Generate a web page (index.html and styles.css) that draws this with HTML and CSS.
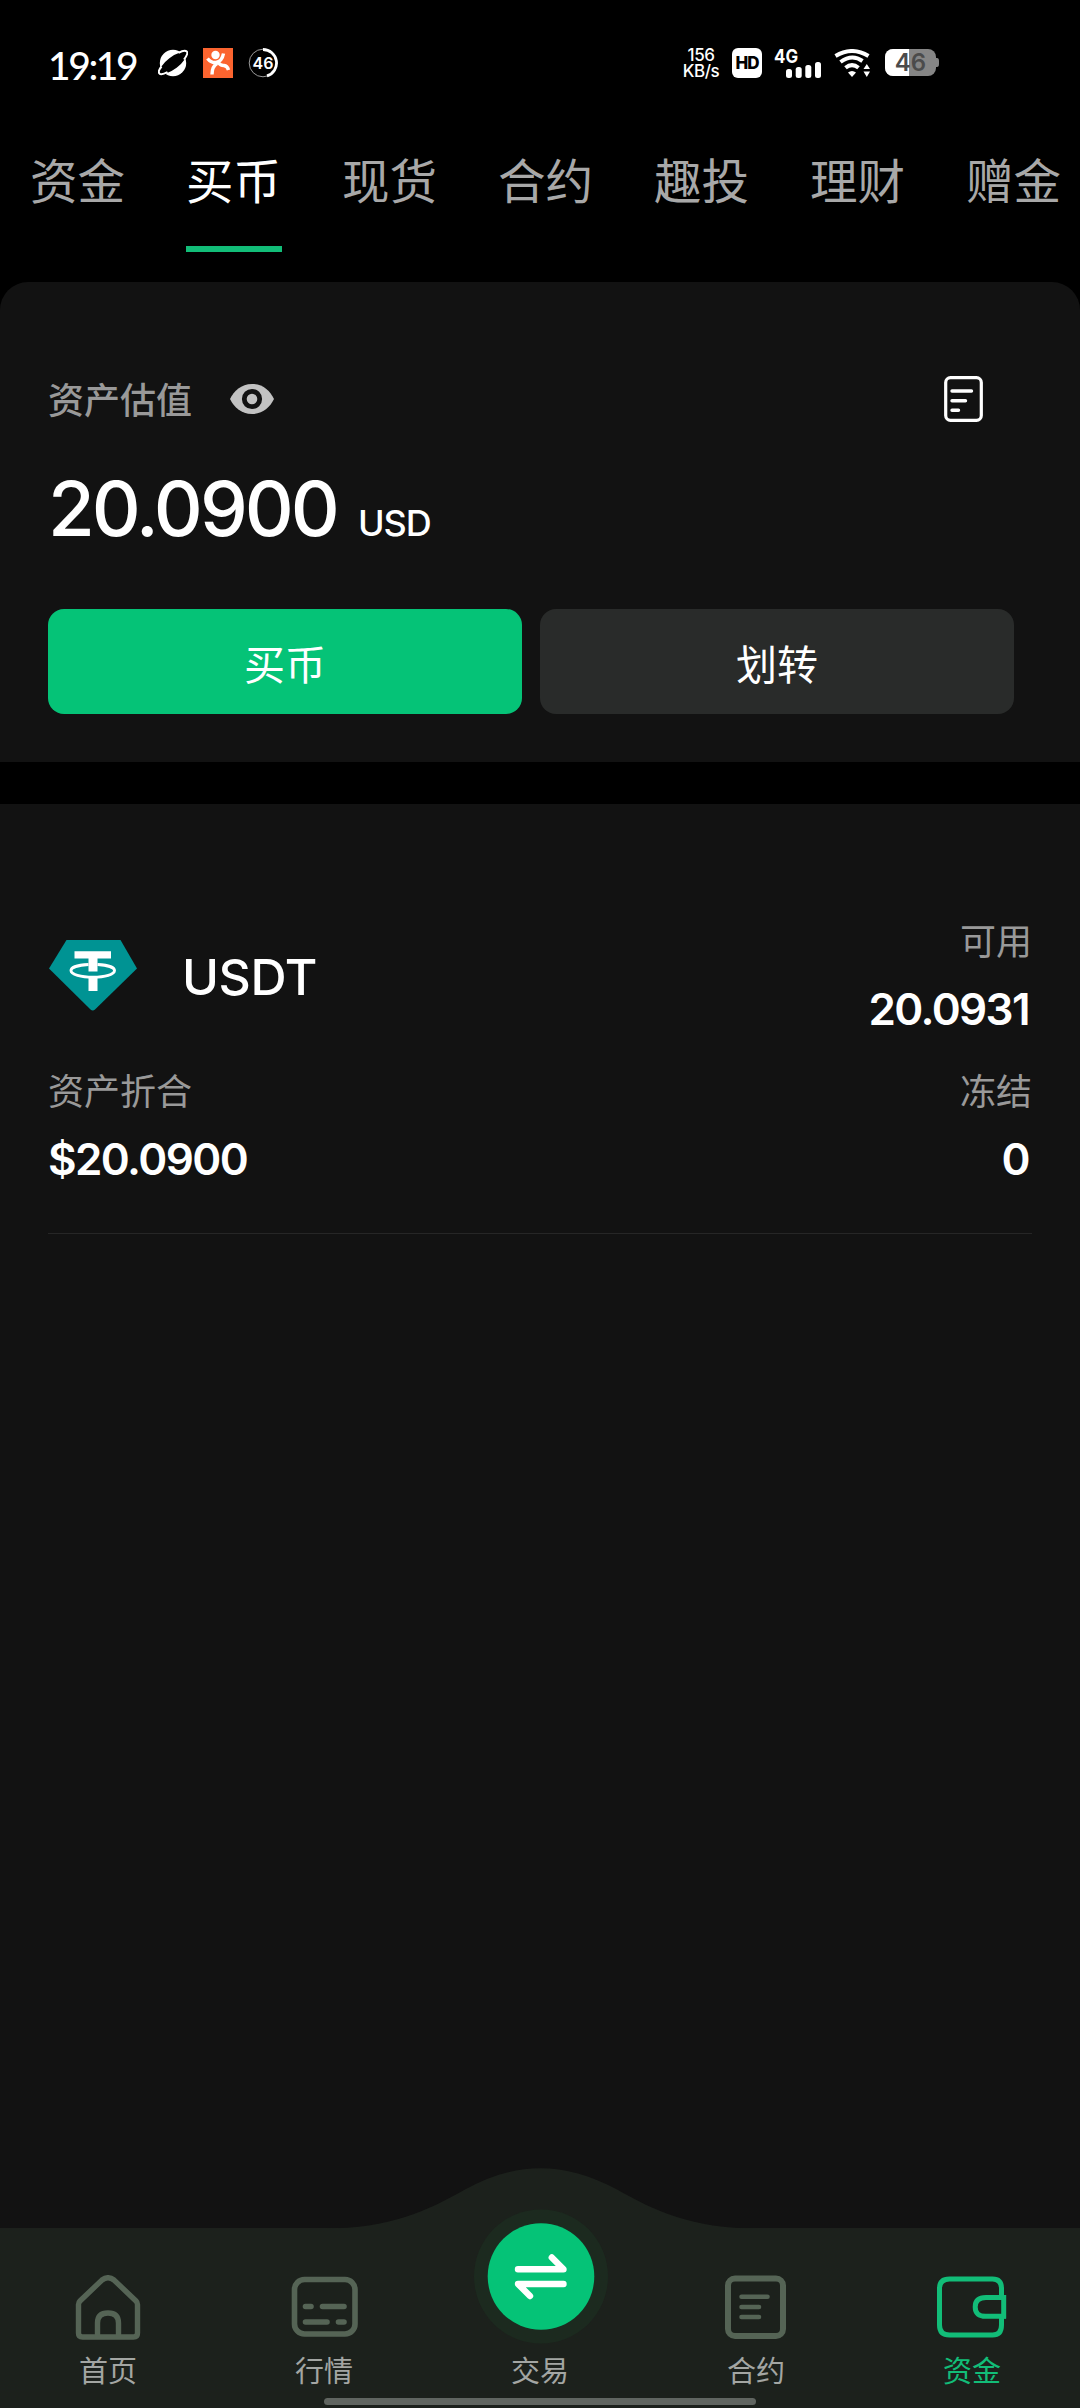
FILE: index.html
```html
<!DOCTYPE html>
<html lang="zh-CN">
<head>
<meta charset="utf-8">
<title>资金</title>
<link rel="stylesheet" href="styles.css">
</head>
<body>
<div class="screen">
  <header class="status">
    <div class="status-left">
      <span class="clock">19:19</span>
      <svg class="planet" width="30" height="28" viewBox="0 0 30 28">
        <circle cx="15" cy="14" r="13.200" fill="#fff"/>
        <ellipse cx="15" cy="14" rx="16" ry="6" transform="rotate(-37 15 14)" fill="#000"/>
        <path d="M3.500 17.500C1 20.500 .3 23 1.300 24.300 2.500 25.800 6 25 9.500 23M26 10.500C29 6.500 30 3.800 28.800 2.600 27.500 1.400 24 2 20.500 3.800" fill="none" stroke="#fff" stroke-width="2"/>
      </svg>
      <svg class="runner" width="30" height="30" viewBox="0 0 30 30">
        <rect width="30" height="30" fill="#fb642f"/>
        <circle cx="12.500" cy="7" r="4.200" fill="#fff"/>
        <path d="M4.500 10.500Q8 15 13 14.500 19 13.500 20.500 5.500M9 26.500Q9 18.500 14 15.500M15 14.500Q18.500 18 21 17.500 24.500 18 25.500 22" fill="none" stroke="#fff" stroke-width="3.400"/>
      </svg>
      <svg class="ring" width="30" height="30" viewBox="0 0 30 30">
        <circle cx="15" cy="15" r="13.800" fill="none" stroke="#999" stroke-width="1"/>
        <path d="M15 1.500A13.500 13.500 0 0 1 19 27.900" fill="none" stroke="#fff" stroke-width="2.800"/>
        <text x="15" y="20.500" text-anchor="middle" class="ring-text">46</text>
      </svg>
    </div>
    <div class="status-right">
      <div class="speed"><span>156</span><span>KB/s</span></div>
      <span class="hd">HD</span>
      <svg class="signal" width="48" height="38" viewBox="0 -4 48 38">
        <text x="0" y="14.500" class="net-text" textLength="24" lengthAdjust="spacingAndGlyphs">4G</text>
        <g fill="#fff"><rect x="12" y="21" width="6" height="9" rx="2.500"/><rect x="21.700" y="19" width="6" height="11" rx="2.500"/><rect x="31.300" y="17" width="6" height="13" rx="2.500"/><rect x="41" y="14" width="6" height="16" rx="2.500"/></g>
      </svg>
      <svg class="wifi" width="38" height="28" viewBox="0 0 38 28">
        <g fill="none" stroke="#fff" stroke-width="4"><path d="M1.500 7Q18 -3 34.500 7"/><path d="M6.500 13Q18 4.500 28.500 12"/><path d="M11.500 18.800Q18 13.500 24.500 18.800"/></g>
        <path d="M14 23.500Q18 20.500 22 23.500L18 28Z" fill="#fff"/>
        <path d="M29.500 20 32.800 15 36 20ZM29.500 22.500 32.800 28 36 22.500Z" fill="#fff"/>
      </svg>
      <svg class="battery" width="54" height="28" viewBox="0 0 54 28">
        <rect width="51" height="27" rx="8" fill="#858585"/>
        <path d="M8 0H24V27H8A8 8 0 0 1 0 19V8A8 8 0 0 1 8 0Z" fill="#fff"/>
        <path d="M51 9H52Q54 9 54 12V15Q54 18 52 18H51Z" fill="#858585"/>
        <text x="25.500" y="21.800" text-anchor="middle" class="battery-text">46</text>
      </svg>
    </div>
  </header>

  <nav class="tabs">
    <a class="tab">资金</a>
    <a class="tab tab-active">买币</a>
    <a class="tab">现货</a>
    <a class="tab">合约</a>
    <a class="tab">趣投</a>
    <a class="tab">理财</a>
    <a class="tab">赠金</a>
  </nav>

  <section class="summary">
    <div class="summary-head">
      <span class="summary-label">资产估值</span>
      <svg class="eye" width="44" height="30" viewBox="0 0 44 30">
        <path d="M22 0C33 0 40 7 44 15 40 23 33 30 22 30S4 23 0 15C4 7 11 0 22 0Z" fill="#c2c2c2"/>
        <circle cx="22" cy="15" r="7.700" fill="#c2c2c2" stroke="#121212" stroke-width="4.800"/>
      </svg>
      <svg class="record" width="39" height="46" viewBox="0 0 39 46">
        <rect x="1.700" y="1.700" width="35.600" height="42.600" rx="4.800" fill="none" stroke="#fff" stroke-width="3.200"/>
        <path d="M8 15H27.500M8 24.800H21.500M8 34.300H14.500" stroke="#fff" stroke-width="3.400" stroke-linecap="round"/>
      </svg>
    </div>
    <div class="balance"><span class="amount">20.0900</span><span class="unit">USD</span></div>
    <div class="actions">
      <button class="btn btn-primary">买币</button>
      <button class="btn">划转</button>
    </div>
  </section>

  <main class="assets">
    <article class="asset">
      <div class="asset-top">
        <svg class="gem" width="88" height="71" viewBox="0 0 88 71">
          <path d="M17.500 0H71.500L88 28.500 46 69.500Q43.800 71.500 41.500 69.500L0 28.500Z" fill="#009393"/>
          <path d="M25.500 11.300H62V18.500H48.500V31.500H39.500V18.500H25.500ZM39.500 36H48.500V51H39.500Z" fill="#fff"/>
          <path d="M39.500 24.500C29 25 22 27.500 22 30.500 22 34.500 32 37.200 44 37.200S65.500 34.500 65.500 30.500C65.500 27.500 58.500 25 48.500 24.500" fill="none" stroke="#fff" stroke-width="2.900"/>
        </svg>
        <span class="asset-name">USDT</span>
        <div class="field field-end">
          <span class="label">可用</span>
          <span class="value">20.0931</span>
        </div>
      </div>
      <div class="asset-bottom">
        <div class="field">
          <span class="label">资产折合</span>
          <span class="value">$20.0900</span>
        </div>
        <div class="field field-end">
          <span class="label">冻结</span>
          <span class="value">0</span>
        </div>
      </div>
    </article>
  </main>

  <footer class="dock">
    <svg class="dock-shape" width="1080" height="240" viewBox="0 0 1080 240">
      <path d="M0 60.500H325C390 60.500 427 43 465 21.500 516 -6.800 564 -6.800 617 21.500 655 43 692 60.500 757 60.500H1080V240H0Z" fill="#1c211c"/>
      <circle cx="541" cy="108.500" r="67" fill="#1c2a1f"/>
      <circle cx="541" cy="108.500" r="53.300" fill="#05c377"/>
      <path d="M518 101.200H563.500L551.800 89.500M563.500 116H518L530 128" fill="none" stroke="#fff" stroke-width="6.400" stroke-linecap="round" stroke-linejoin="round"/>
    </svg>
    <nav class="dock-items">
      <a class="dock-item">
        <svg width="72" height="66" viewBox="0 0 72 66" fill="none" stroke="#556455" stroke-width="5.400">
          <path d="M6.500 29.500Q6.500 27.500 8 26L30 5Q36 0.500 42 5L64 26Q65.500 27.500 65.500 29.500V58Q65.500 62 61.500 62H10.500Q6.500 62 6.500 58Z"/>
          <path d="M25.500 61V48Q25.500 38 36 38T46.500 48V61"/>
        </svg>
        <span>首页</span>
      </a>
      <a class="dock-item">
        <svg width="72" height="66" viewBox="0 0 72 66" fill="none" stroke="#556455" stroke-width="5.600">
          <rect x="6.500" y="4.500" width="60.500" height="54.500" rx="10"/>
          <path d="M17.500 31.500H23M34.500 31.500H56M17.500 47H39M50.500 47H56" stroke-linecap="round"/>
        </svg>
        <span>行情</span>
      </a>
      <a class="dock-item">
        <span class="dock-space"></span>
        <span>交易</span>
      </a>
      <a class="dock-item">
        <svg width="72" height="66" viewBox="0 0 72 66" fill="none" stroke="#556455" stroke-width="6">
          <rect x="8" y="3.500" width="55" height="57.500" rx="7"/>
          <path d="M21.500 21.800H47.500M21.500 32H39M21.500 42H39" stroke-width="4.600" stroke-linecap="round"/>
        </svg>
        <span>合约</span>
      </a>
      <a class="dock-item dock-active">
        <svg width="72" height="66" viewBox="0 0 72 66" fill="none" stroke="#12bd78" stroke-width="5">
          <path d="M65.500 20V13.500Q65.500 4 56.500 4H13.500Q3.500 4 3.500 13.500V50Q3.500 60 13.500 60H56.500Q65.500 60 65.500 50V41"/>
          <path d="M70 22.500H50Q39.200 22.500 39.200 32T50 41.300H70"/>
          <path d="M67.700 20V43.500"/>
        </svg>
        <span>资金</span>
      </a>
    </nav>
    <div class="home-bar"></div>
  </footer>
</div>
</body>
</html>
```
FILE: styles.css
```css
* { box-sizing: border-box; }

body {
  margin: 0;
  background: #000;
  color: #fff;
  font-family: "Noto Sans CJK SC", sans-serif;
}

svg { display: block; flex: none; }

.screen {
  width: 1080px;
  height: 2408px;
  display: flex;
  flex-direction: column;
  overflow: hidden;
}

/* Status bar */
.status {
  height: 126px;
  padding: 0 141px 0 48px;
  display: flex;
  justify-content: space-between;
  align-items: center;
  flex: none;
}

.status-left, .status-right { display: flex; align-items: center; }

.clock {
  width: 110px;
  font: 500 39px/44px Lato, sans-serif;
  letter-spacing: -2.4px;
  padding-top: 4px;
}

.runner { margin-left: 15px; }
.ring { margin-left: 15px; }
.ring-text { font: 600 16px Inter, sans-serif; fill: #fff; }

.speed {
  width: 36px;
  margin-right: 13px;
  display: flex;
  flex-direction: column;
  align-items: center;
  font: 500 17px/16px Inter, sans-serif;
  letter-spacing: -0.5px;
}

.hd {
  width: 30px;
  height: 30px;
  border-radius: 6px;
  background: #fff;
  color: #000;
  font: 800 17px/30px Inter, sans-serif;
  letter-spacing: -1px;
  text-align: center;
}

.signal { margin-left: 12px; }
.net-text { font: 700 19px Inter, sans-serif; fill: #fff; }
.wifi { margin-left: 12px; }
.battery { margin-left: 13px; }
.battery-text { font: 600 24px Inter, sans-serif; fill: #4b4b4b; }

/* Account tabs */
.tabs {
  height: 126px;
  margin-bottom: 30px;
  padding-left: 30px;
  display: flex;
  gap: 60px;
  flex: none;
}

.tab {
  width: 96px;
  flex: none;
  border-bottom: 6px solid transparent;
  color: #a8a8a8;
  font-size: 47.5px;
  line-height: 106px;
  white-space: nowrap;
}

.tab-active { color: #fff; border-color: #12bd78; }

/* Balance summary */
.summary {
  height: 480px;
  padding: 87px 66px 48px 48px;
  border-radius: 28px 28px 0 0;
  background: #121212;
  flex: none;
  display: flex;
  flex-direction: column;
}

.summary-head { height: 60px; display: flex; align-items: center; }

.summary-label {
  color: #999;
  font-size: 36px;
  font-weight: 500;
  line-height: 56px;
  margin-top: -2px;
}

.eye { margin-left: 38px; }
.record { margin: 0 31px 0 auto; }

.balance {
  height: 120px;
  margin-top: 19px;
  display: flex;
  align-items: baseline;
  font-family: Inter, sans-serif;
  font-weight: 500;
  line-height: 120px;
}

.amount { font-size: 76px; letter-spacing: -3px; }
.unit { margin-left: 21px; font-size: 36px; letter-spacing: -1px; }

.actions { display: flex; gap: 18px; margin-top: auto; }

.btn {
  flex: 1;
  height: 105px;
  padding: 0;
  border: 0;
  border-radius: 16px;
  background: #292b2a;
  color: #fff;
  font: 400 41px/60px "Noto Sans CJK SC", sans-serif;
}

.btn-primary { background: #05c377; }

/* Asset list */
.assets {
  flex: 1;
  margin-top: 42px;
  padding: 108px 48px 0;
  background: #121212;
}

.asset {
  height: 322px;
  border-bottom: 1px solid #262626;
}

.asset-top { height: 150px; display: flex; }
.gem { margin: 28px 0 0 1px; }

.asset-name {
  margin-left: 45px;
  padding-top: 30px;
  font: 500 50px/70px Inter, sans-serif;
  letter-spacing: -0.4px;
}

.field { display: flex; flex-direction: column; }
.field-end { margin-left: auto; align-items: flex-end; }
.label { color: #999; font-size: 36px; line-height: 54px; }

.value {
  margin-top: 12px;
  font: 600 44px/62px Inter, sans-serif;
  letter-spacing: -1.6px;
}

.field-end .value { padding-right: 3px; }

.asset-bottom { display: flex; }

/* Bottom dock */
.dock {
  position: relative;
  flex: none;
  height: 180px;
  background: #1c211c;
}

/* The raised hump overlaps the asset list above the dock */
.dock-shape { position: absolute; left: 0; bottom: 0; }

.dock-items { position: relative; display: flex; padding-top: 47px; }

.dock-item {
  flex: 1;
  display: flex;
  flex-direction: column;
  align-items: center;
  color: #a3a6a3;
  font-size: 29px;
  line-height: 44px;
}

.dock-item span:last-child { margin-top: 6px; }
.dock-space { height: 66px; }
.dock-active { color: #12bd78; }

.home-bar {
  position: absolute;
  left: 324px;
  bottom: 3px;
  width: 432px;
  height: 7px;
  border-radius: 4px;
  background: #606560;
}
```
